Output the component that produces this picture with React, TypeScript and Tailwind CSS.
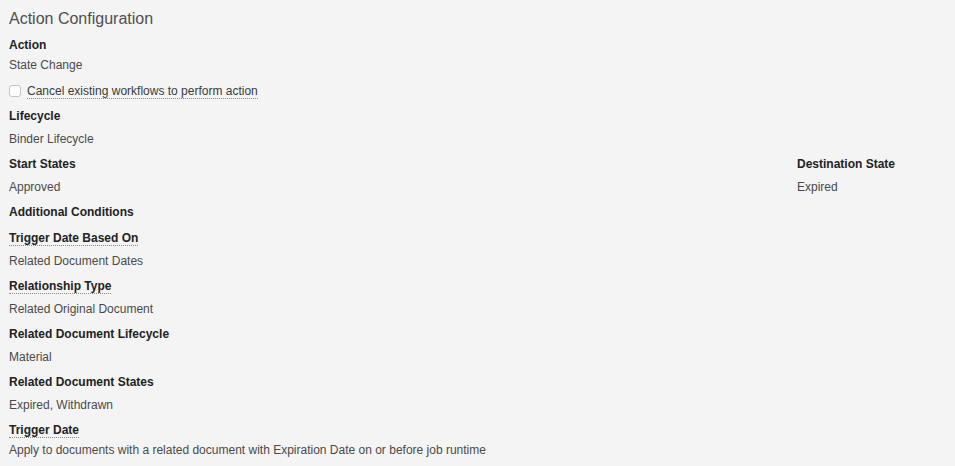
import React from 'react';

const font = { fontFamily: '"Liberation Sans", Arial, Helvetica, sans-serif' };

function Label({ children, dotted = false, className = '' }: { children: React.ReactNode; dotted?: boolean; className?: string }) {
  return (
    <div className={`h-5 leading-5 text-xs font-bold text-[#222] ${className}`}>
      {dotted ? (
        <span className="inline-block leading-[14px] border-b border-dotted border-[#8a8a8a]">{children}</span>
      ) : (
        children
      )}
    </div>
  );
}

function Value({ children, className = '' }: { children: React.ReactNode; className?: string }) {
  return <div className={`h-5 leading-5 text-xs text-[#4a4a4a] ${className}`}>{children}</div>;
}

export default function App() {
  return (
    <div className="min-h-[466px] w-full bg-[#f4f4f4] px-[9px] pt-[7px]" style={font}>
      <h2 className="h-6 leading-6 text-base text-[#4f4f4f]">Action Configuration</h2>

      <Label className="mt-1 mb-0">Action</Label>
      <Value className="mb-[6px]">State Change</Value>

      <div className="flex items-center h-5 mb-[5px]">
        <span className="w-[12px] h-[12px] rounded-[3px] border border-[#c4c4c4] bg-white" />
        <span className="ml-[6px] text-xs text-[#3a3a3a] inline-block leading-[14px] border-b border-dotted border-[#8a8a8a]">
          Cancel existing workflows to perform action
        </span>
      </div>

      <Label className="mb-[3px]">Lifecycle</Label>
      <Value className="mb-[5px]">Binder Lifecycle</Value>

      <div className="flex mb-[5px]">
        <div className="flex-1">
          <Label className="mb-[3px]">Start States</Label>
          <Value>Approved</Value>
        </div>
        <div className="w-[149px]">
          <Label className="mb-[3px]">Destination State</Label>
          <Value>Expired</Value>
        </div>
      </div>

      <Label className="mb-[6px]">Additional Conditions</Label>

      <Label dotted className="mb-[3px]">Trigger Date Based On</Label>
      <Value className="mb-[5px]">Related Document Dates</Value>

      <Label dotted className="mb-[3px]">Relationship Type</Label>
      <Value className="mb-[5px]">Related Original Document</Value>

      <Label className="mb-[3px]">Related Document Lifecycle</Label>
      <Value className="mb-[5px]">Material</Value>

      <Label className="mb-[3px]">Related Document States</Label>
      <Value className="mb-[5px]">Expired, Withdrawn</Value>

      <Label dotted>Trigger Date</Label>
      <Value>Apply to documents with a related document with Expiration Date on or before job runtime</Value>
    </div>
  );
}
